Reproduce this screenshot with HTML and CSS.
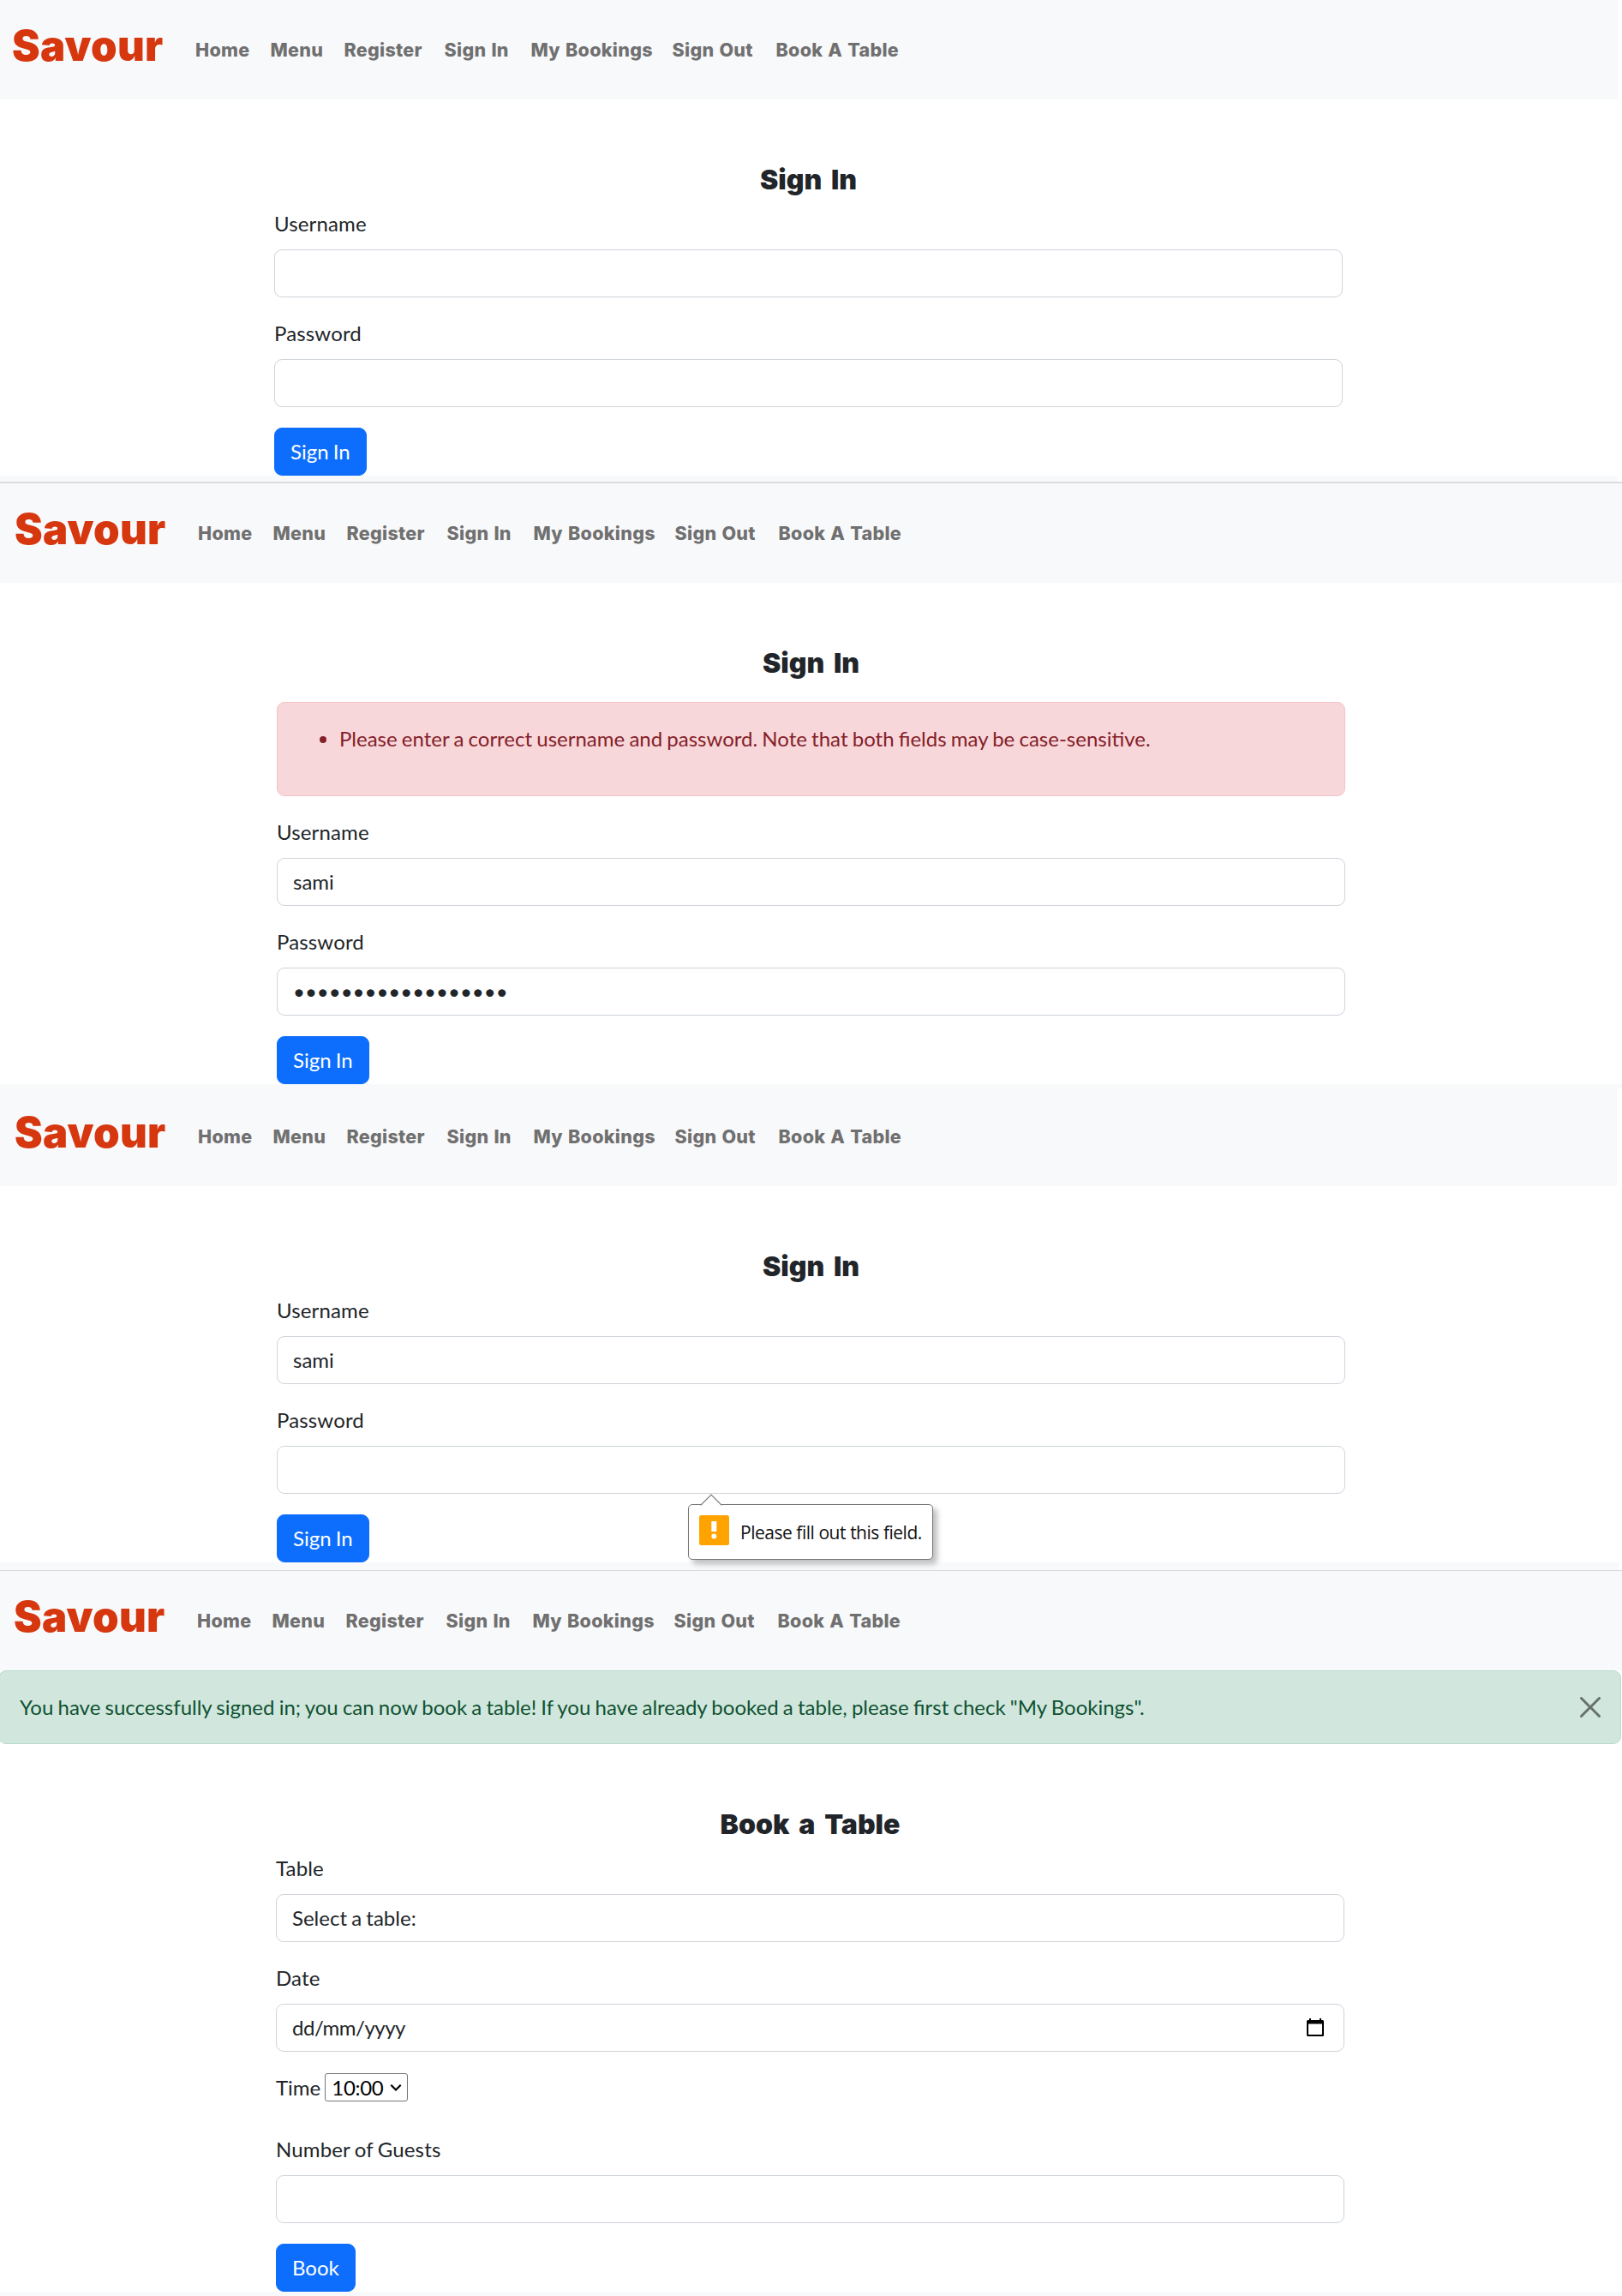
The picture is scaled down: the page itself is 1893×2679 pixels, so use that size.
FILE: index.html
```
<!DOCTYPE html>
<html lang="en">
<head>
<meta charset="utf-8">
<title>Savour</title>
<link rel="stylesheet" href="styles.css">
</head>
<body>

<section class="screen screen-blank">
  <nav class="navbar">
    <a class="brand">Savour</a>
    <ul class="nav-links"><li>Home</li><li>Menu</li><li>Register</li><li>Sign In</li><li>My Bookings</li><li>Sign Out</li><li>Book A Table</li></ul>
  </nav>
  <form class="container">
    <h2 class="title">Sign In</h2>
    <label class="label">Username</label>
    <input class="control" type="text">
    <label class="label">Password</label>
    <input class="control" type="password">
    <button class="btn" type="button">Sign In</button>
  </form>
  <div class="strip"></div>
</section>

<section class="screen screen-error">
  <nav class="navbar">
    <a class="brand">Savour</a>
    <ul class="nav-links"><li>Home</li><li>Menu</li><li>Register</li><li>Sign In</li><li>My Bookings</li><li>Sign Out</li><li>Book A Table</li></ul>
  </nav>
  <form class="container">
    <h2 class="title">Sign In</h2>
    <div class="alert alert-danger">
      <ul class="errors"><li>Please enter a correct username and password. Note that both fields may be case-sensitive.</li></ul>
    </div>
    <label class="label">Username</label>
    <input class="control" type="text" value="sami">
    <label class="label">Password</label>
    <input class="control" type="password" value="abcdefghijklmnopqr">
    <button class="btn" type="button">Sign In</button>
  </form>
  <div class="strip"></div>
</section>

<section class="screen screen-required">
  <nav class="navbar">
    <a class="brand">Savour</a>
    <ul class="nav-links"><li>Home</li><li>Menu</li><li>Register</li><li>Sign In</li><li>My Bookings</li><li>Sign Out</li><li>Book A Table</li></ul>
  </nav>
  <form class="container">
    <h2 class="title">Sign In</h2>
    <label class="label">Username</label>
    <input class="control" type="text" value="sami">
    <label class="label">Password</label>
    <div class="anchor">
      <input class="control" type="password">
      <div class="bubble">
        <svg class="bubble-arrow" width="26" height="14" viewBox="0 0 26 14"><path d="M1 13.5L13 1L25 13.5V14H1Z" fill="#fff"/><path d="M0.5 12.8H1.2L13 1L24.8 12.8H25.5" fill="none" stroke="#7a7a7a" stroke-width="1.2"/></svg>
        <svg class="bubble-icon" width="35" height="35" viewBox="0 0 35 35"><rect width="35" height="35" rx="2.5" fill="#ffa300"/><rect x="14.3" y="7" width="6" height="12" fill="#fff"/><circle cx="17.3" cy="24.5" r="2.9" fill="#fff"/></svg>
        <span class="bubble-text">Please fill out this field.</span>
      </div>
    </div>
    <button class="btn" type="button">Sign In</button>
  </form>
  <div class="strip"></div>
</section>

<section class="screen screen-booking">
  <nav class="navbar">
    <a class="brand">Savour</a>
    <ul class="nav-links"><li>Home</li><li>Menu</li><li>Register</li><li>Sign In</li><li>My Bookings</li><li>Sign Out</li><li>Book A Table</li></ul>
  </nav>
  <div class="alert alert-success">
    <span>You have successfully signed in; you can now book a table! If you have already booked a table, please first check "My Bookings".</span>
    <svg class="close" width="24" height="24" viewBox="0 0 16 16"><path d="M.293.293a1 1 0 0 1 1.414 0L8 6.586 14.293.293a1 1 0 1 1 1.414 1.414L9.414 8l6.293 6.293a1 1 0 0 1-1.414 1.414L8 9.414l-6.293 6.293a1 1 0 0 1-1.414-1.414L6.586 8 .293 1.707a1 1 0 0 1 0-1.414z"/></svg>
  </div>
  <form class="container">
    <h2 class="title">Book a Table</h2>
    <label class="label">Table</label>
    <div class="control">Select a table:</div>
    <label class="label">Date</label>
    <div class="control control-date"><span>dd/mm/yyyy</span>
      <svg class="calendar" width="20" height="21" viewBox="0 0 20 21"><path d="M3 0H5V2H15V0H17V2H18.5A1.5 1.5 0 0 1 20 3.5V19.5A1.5 1.5 0 0 1 18.5 21H1.5A1.5 1.5 0 0 1 0 19.5V3.5A1.5 1.5 0 0 1 1.5 2H3ZM2 6.500V19H18V6.500Z" fill="#000" fill-rule="evenodd"/></svg>
    </div>
    <div class="time-row"><label>Time</label>
      <div class="select">10:00<svg width="14" height="10" viewBox="0 0 14 10"><path d="M1.300 1.800L7 7.500L12.700 1.800" fill="none" stroke="#000" stroke-width="2.200"/></svg></div>
    </div>
    <label class="label">Number of Guests</label>
    <input class="control" type="text">
    <button class="btn" type="button">Book</button>
  </form>
  <div class="strip"></div>
</section>

</body>
</html>
```
FILE: styles.css
```
* { box-sizing: border-box; }

body {
  margin: 0;
  background: #fff;
  color: #212529;
  font-family: Lato, sans-serif;
  font-size: 24px;
  line-height: 36px;
  word-spacing: -0.95px;
  overflow-x: hidden;
}

.screen { --shift: 0px; --edge: 1893px; }
.screen-blank { --edge: 1888px; }
.screen-error { --shift: 3px; border-top: 2px solid #dadcdf; }
.screen-required { --shift: 3px; --edge: 1887px; }
.screen-booking { --shift: 2px; border-top: 1px solid #d8dadd; }

.navbar {
  display: flex;
  align-items: flex-end;
  width: var(--edge);
  height: 116px;
  padding-left: calc(14px + var(--shift));
  background: #f8f9fb;
  font-family: Inter, sans-serif;
}
.screen-required .navbar { height: 114px; }

.brand {
  width: 214px;
  margin-bottom: 9px;
  color: #d6370f;
  font-size: 49px;
  font-weight: 900;
  line-height: 106px;
  letter-spacing: 0.3px;
}

.nav-links {
  display: grid;
  grid-template-columns: 87.500px 86px 117px 101px 165px 121px 160px;
  margin: 0;
  padding: 0;
  list-style: none;
  color: #707070;
  font-size: 21.5px;
  font-weight: 800;
  line-height: 116px;
  letter-spacing: 0.3px;
  word-spacing: 1px;
  white-space: nowrap;
}

.container {
  width: 1247px;
  margin-left: calc(320px + var(--shift));
}

.title {
  margin: 0 0 10px;
  padding-top: 72px;
  font-family: Inter, sans-serif;
  font-size: 32px;
  font-weight: 900;
  line-height: 44px;
  padding-bottom: 1px;
  letter-spacing: 0;
  word-spacing: 4.5px;
  text-align: center;
}

.label { display: block; margin-bottom: 12px; letter-spacing: 0.15px; }

.control {
  display: block;
  width: 100%;
  height: 56px;
  margin: 0 0 24px;
  padding: 9px 18px;
  border: 1px solid #ced4da;
  border-radius: 9px;
  background: #fff;
  color: #212529;
  font: inherit;
}
input.control { padding: 8px 18px 10px; }

.control-date { display: flex; justify-content: space-between; letter-spacing: -0.5px; }
.calendar { margin: 7px 5px 0 0; }

.btn {
  display: block;
  height: 56px;
  padding: 9px 18px;
  border: 1px solid #0d6efd;
  border-radius: 9px;
  background: #0d6efd;
  color: #fff;
  font: inherit;
  word-spacing: inherit;
}

.strip { width: 1893px; height: 5px; background: #f8f9fa; }
.screen-blank .strip { width: 1888px; height: 7px; }
.screen-required .strip { width: 1889px; height: 9px; }

.alert {
  padding: 24px;
  border: 1px solid;
  border-radius: 9px;
}
.alert-danger {
  margin: 22px 0 24px;
  border-color: #f5c2c7;
  background: #f8d7da;
  color: #842029;
}
.errors { margin: 0 0 24px; padding-left: 48px; }

.alert-success {
  display: flex;
  justify-content: space-between;
  width: 1894px;
  margin-left: -2px;
  padding-right: 23px;
  border-color: #badbcc;
  background: #d1e7dd;
  color: #0f5132;
}
.close { margin-top: 6px; opacity: .5; }

.time-row {
  display: flex;
  gap: 5px;
  height: 36px;
  margin-bottom: 36px;
}
.select {
  display: flex;
  align-items: center;
  gap: 8px;
  width: 97px;
  height: 33px;
  margin-top: 1px;
  padding: 0 7px 0 7px;
  border: 1px solid #767676;
  border-radius: 3px;
  color: #000;
  line-height: 33px;
  letter-spacing: -0.3px;
}
.select svg { flex: none; }

.anchor { position: relative; }
.bubble {
  position: absolute;
  left: 480px;
  top: 68px;
  display: flex;
  gap: 13px;
  width: 286px;
  height: 65px;
  padding: 12px;
  border: 1px solid #767676;
  border-radius: 5px;
  background: #fff;
  box-shadow: 5px 5px 6px rgba(0, 0, 0, .25);
  color: #111;
}
.bubble-arrow { position: absolute; left: 13px; top: -13px; }
.bubble-text {
  font-family: "Open Sans", sans-serif;
  font-size: 21px;
  line-height: 41px;
  letter-spacing: -0.500px;
  word-spacing: 0.200px;
  white-space: nowrap;
}
```
